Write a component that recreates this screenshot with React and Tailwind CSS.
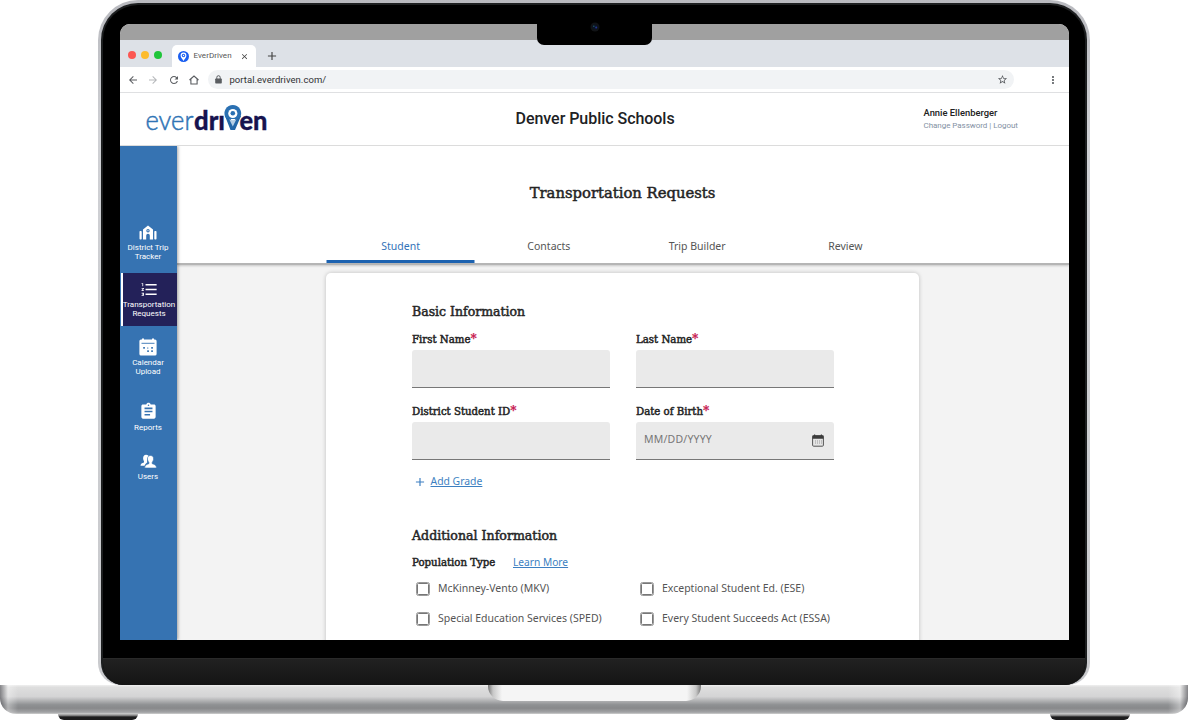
import React from "react";
import { MdArrowBack, MdArrowForward, MdRefresh, MdStarBorder, MdMoreVert, MdAssignment, MdFormatListNumbered, MdClose, MdAdd } from "react-icons/md";

const slab = "font-['DejaVu_Serif',serif] font-normal [-webkit-text-stroke:0.5px_#262626]";
const sans = "font-['Noto_Sans',sans-serif]";

function Logo() {
  return (
    <svg className="w-[130px] h-[40px]" viewBox="0 -4 130 40">
      <text x="0.500" y="26" textLength="48" lengthAdjust="spacingAndGlyphs" fontFamily="Lato" fontWeight="300" fontSize="27" fill="#2f74b5" stroke="#2f74b5" strokeWidth="0.500">ever</text>
      <text x="49" y="26" textLength="31" lengthAdjust="spacingAndGlyphs" fontFamily="Lato" fontWeight="900" fontSize="26" fill="#17134f" stroke="#17134f" strokeWidth="0.300">drı</text>
      <text x="94.500" y="26" textLength="28" lengthAdjust="spacingAndGlyphs" fontFamily="Lato" fontWeight="900" fontSize="26" fill="#17134f" stroke="#17134f" strokeWidth="0.300">en</text>
      <path d="M80 12H84.500L87.800 20.500 91.500 12H96L90 26H85.500Z" fill="#2468a8" />
      <path d="M80.300 13.200A8.400 8.400 0 1 1 95.300 13.200L91.500 15H84Z" fill="#2a70b2" />
      <circle cx="87.800" cy="9.500" r="4.600" fill="#fff" />
      <circle cx="87.800" cy="9.200" r="2.300" fill="#2a70b2" />
      <path d="M84.200 15.300Q87.800 17.300 91.400 15.300L87.800 22.500Z" fill="#b5cfe5" />
    </svg>
  );
}

function SchoolIcon() {
  return (
    <svg className="w-[18px] h-[15px]" viewBox="0 0 18 15" fill="#fff">
      <path fillRule="evenodd" d="M9 0.500L14 4.600V14.500H10.800V10.500a1.800 1.800 0 0 0-3.600 0V14.500H4V4.600ZM9 4a1.700 1.700 0 1 0 0 3.400A1.700 1.700 0 0 0 9 4Z" />
      <rect x="0.500" y="6" width="2.200" height="8.500" rx="0.800" />
      <rect x="15.300" y="6" width="2.200" height="8.500" rx="0.800" />
      <circle cx="9" cy="5.700" r="0.600" />
    </svg>
  );
}

function CalendarIcon() {
  return (
    <svg className="w-[18px] h-[18px]" viewBox="0 0 18 18">
      <path fill="#fff" d="M2 1.500h1V0.500h2v1h8v-1h2v1h1a1.600 1.600 0 0 1 1.600 1.600V16a1.600 1.600 0 0 1-1.600 1.600H2A1.600 1.600 0 0 1 .400 16V3.100A1.600 1.600 0 0 1 2 1.500Z" />
      <path stroke="#3673b2" strokeWidth="0.900" d="M2.500 5.300h13" />
      <g fill="#3673b2">
        <rect x="4.200" y="9" width="1.700" height="1.700" /><rect x="8.200" y="12.300" width="1.700" height="1.700" /><rect x="8.200" y="9.500" width="1.100" height="1.100" />
        <rect x="12.200" y="9" width="1.700" height="1.700" /><rect x="12.200" y="12.300" width="1.700" height="1.700" />
      </g>
    </svg>
  );
}

function UsersIcon() {
  return (
    <svg className="w-[17px] h-[15px]" viewBox="0 0 17 15" fill="#fff">
      <path d="M6 0.800c2 0 3 1 3 2.400C7 4 6.600 6 7.300 8.300L5.500 10 4.500 11.800H0.500C0.500 9.500 2 9 4 8.400V7.200C2.500 5 2.800 0.800 6 0.800Z" />
      <path stroke="#3673b2" strokeWidth="0.600" d="M10.500 1.500c2.300 0 3.300 1.700 3 3.800-.100 1.300-.700 2.300-1.300 3v1.400c2 .700 4.300 1 4.300 4.300H4.700c0-3.300 2.300-3.600 4.200-4.300V8.300C8.200 7.600 7.600 6.600 7.500 5.300 7.200 3.200 8.300 1.500 10.500 1.500Z" />
    </svg>
  );
}

function DateIcon() {
  return (
    <svg className="w-[12px] h-[13px]" viewBox="0 0 12 13">
      <rect x="0.600" y="1.600" width="10.800" height="10.600" rx="1" fill="#e5e5e5" stroke="#555" />
      <path fill="#3c3c3c" d="M.500 1.500H2V.500h1.200v1h5.600v-1H10v1h1.500v3.300H.500Z" />
      <path stroke="#999" strokeWidth="1" strokeDasharray="1 1" d="M3 7h7M3 9h7" />
    </svg>
  );
}

function NavItem({ icon, lines, className }) {
  return (
    <div className={`flex flex-col items-center shrink-0 ${className}`}>
      <div className="flex h-[18px] items-center justify-center">{icon}</div>
      <div className="flex flex-col items-center mt-[2px] text-[8px] leading-[9px] text-white whitespace-nowrap">
        {lines.map((l) => <span key={l}>{l}</span>)}
      </div>
    </div>
  );
}

function Field({ label, children }) {
  return (
    <div className="w-[198px]">
      <div className={`flex h-[20px] text-[10.200px] leading-[19px] text-[#262626] whitespace-nowrap ${slab}`}>
        {label}<span className="font-bold text-[12px] leading-[19px] text-[#c7174f] [-webkit-text-stroke:0.2px_#c7174f]">*</span>
      </div>
      <div className="flex h-[38px] items-center justify-between rounded-t-[3px] border-b border-[#777] bg-[#eaeaea] pl-2 pr-[10px]">
        {children}
      </div>
    </div>
  );
}

function Check({ label }) {
  return (
    <div className="flex h-[30px] items-center pl-[5px]">
      <div className="h-[12px] w-[12px] rounded-[1.500px] border-[1.500px] border-[#777] outline-[0.500px] outline-[#999] shrink-0" />
      <span className={`ml-[9px] text-[10.500px] text-[#555] whitespace-nowrap ${sans}`}>{label}</span>
    </div>
  );
}

function BrowserChrome() {
  return (
    <>
      <div className="h-4 shrink-0 bg-[#a0a0a0]" />
      <div className="flex h-[27px] shrink-0 items-end bg-[#dde1e7] pl-[8px]">
        <div className="flex h-[27px] items-center gap-[5px] w-[44px] pt-[2px]">
          <div className="h-[8px] w-[8px] rounded-full bg-[#fc5753]" />
          <div className="h-[8px] w-[8px] rounded-full bg-[#fdbc2e]" />
          <div className="h-[8px] w-[8px] rounded-full bg-[#1fc53a]" />
        </div>
        <div className="flex h-[22px] w-[84px] items-center rounded-t-[5px] bg-white pl-[6px]">
          <svg className="h-[11px] w-[11px]" viewBox="0 0 11 11">
            <circle cx="5.500" cy="5.500" r="5.500" fill="#1b5ff0" />
            <path fill="#fff" d="M5.500 1.500a2.900 2.900 0 0 1 2.900 2.900C8.400 6.500 6.600 7.500 5.500 10 4.400 7.500 2.600 6.500 2.600 4.400A2.900 2.900 0 0 1 5.500 1.500Z" />
            <circle cx="5.500" cy="4.500" r="1.700" fill="#1b5ff0" /><circle cx="5.500" cy="4.500" r="0.700" fill="#fff" />
          </svg>
          <span className="ml-[5px] text-[8px] text-[#555] tracking-[0.050px] w-[46px]">EverDriven</span>
          <MdClose className="h-[9px] w-[9px] text-[#444]" />
        </div>
        <MdAdd className="mb-[4px] ml-[9px] h-[14px] w-[14px] text-[#444]" />
      </div>
      <div className="flex h-[26px] shrink-0 items-center border-b border-[#dfe0e2] bg-white pl-[7px] text-[#5a5d61]">
        <MdArrowBack className="h-[12px] w-[12px]" />
        <MdArrowForward className="ml-[8px] h-[12px] w-[12px] text-[#b5b7ba]" />
        <MdRefresh className="ml-[9px] h-[12px] w-[12px]" />
        <svg className="ml-[8px] h-[12px] w-[12px]" viewBox="0 0 12 12" fill="none" stroke="currentColor" strokeWidth="1.100">
          <path d="M1.500 6L6 2 10.500 6M2.900 5.200V10H9.100V5.200" />
        </svg>
        <div className="ml-[8px] flex h-[19px] w-[806px] items-center rounded-full bg-[#f1f3f5] pl-[6px] pr-[6px]">
          <svg className="h-[9px] w-[9px]" viewBox="0 0 9 9">
            <rect x="1.200" y="3.500" width="6.600" height="5" rx="0.700" fill="#5a5d61" />
            <path d="M2.800 4V2.400a1.700 1.700 0 0 1 3.400 0V4" fill="none" stroke="#5a5d61" />
          </svg>
          <span className="ml-[7px] mt-px grow text-[9.500px] tracking-[0.040px] text-[#303134]">portal.everdriven.com/</span>
          <MdStarBorder className="h-[11px] w-[11px]" />
        </div>
        <MdMoreVert className="ml-[33px] h-[12px] w-[12px]" />
      </div>
    </>
  );
}

function Screen() {
  return (
    <div className="flex h-[616px] w-[949px] flex-col overflow-hidden rounded-t-[10px] bg-white">
      <BrowserChrome />
      <header className="flex h-[53px] shrink-0 border-b border-[#dcdcdc] bg-white pl-[25px]">
        <div className="w-[370px] pt-[7px]"><Logo /></div>
        <div className="w-[408px] pl-px pt-[15px] text-[16px] leading-[21px] font-medium tracking-[-0.040px] text-[#202124]">Denver Public Schools</div>
        <div className="flex flex-col pl-px pt-[14px] whitespace-nowrap">
          <span className="text-[9.400px] leading-[12px] font-medium text-[#222]">Annie Ellenberger</span>
          <span className="text-[8px] leading-[13px] tracking-[-0.040px] text-[#8391a3]">Change Password | Logout</span>
        </div>
      </header>
      <div className="flex grow overflow-hidden">
        <nav className="z-10 flex w-[57px] shrink-0 flex-col bg-[#3673b2] shadow-[1px_0_3px_rgba(0,0,0,0.350)]">
          <NavItem className="h-[127px] pt-[77px]" icon={<SchoolIcon />} lines={["District Trip", "Tracker"]} />
          <NavItem className="ml-px h-[53px] border-l-2 border-white bg-[#232159] pt-[7px] pr-[1px]" icon={<MdFormatListNumbered className="h-[19px] w-[19px] text-white" />} lines={["Transportation", "Requests"]} />
          <NavItem className="pt-[12px]" icon={<CalendarIcon />} lines={["Calendar", "Upload"]} />
          <NavItem className="pt-[27px]" icon={<MdAssignment className="mb-[2px] h-[19px] w-[19px] text-white" />} lines={["Reports"]} />
          <NavItem className="pt-[20px]" icon={<UsersIcon />} lines={["Users"]} />
        </nav>
        <main className="flex grow flex-col bg-[#f3f3f3]">
          <div className="z-[1] flex h-[119px] shrink-0 flex-col items-center border-b-2 border-[#b5b5b5] bg-white shadow-[0_1px_2px_rgba(0,0,0,0.180)]">
            <h1 className={`mt-[36px] text-[14.800px] leading-[22px] text-[#222] whitespace-nowrap ${slab}`}>Transportation Requests</h1>
            <div className={`mt-[25px] flex w-[593px] translate-x-[0.500px] text-[10.500px] text-[#555] ${sans}`}>
              <div className="flex h-[34px] flex-1 justify-center border-b-[3px] border-[#1c62b0] pt-[9px] leading-[16px] text-[#3272b8]">Student</div>
              <div className="flex flex-1 justify-center pt-[9px] leading-[16px]">Contacts</div>
              <div className="flex flex-1 justify-center pt-[9px] leading-[16px]">Trip Builder</div>
              <div className="flex flex-1 justify-center pt-[9px] leading-[16px]">Review</div>
            </div>
          </div>
          <div className="mt-[8px] ml-[149px] flex h-[400px] w-[593px] shrink-0 flex-col rounded-t-[5px] bg-white pl-[86.500px] shadow-[0_0_4px_rgba(0,0,0,0.220)]">
            <h2 className={`mt-[29px] text-[12.500px] leading-[20px] text-[#262626] ${slab}`}>Basic Information</h2>
            <div className="mt-[8px] grid w-[422px] grid-cols-2 gap-x-[26px] gap-y-[13.500px]">
              <Field label="First Name" />
              <Field label="Last Name" />
              <Field label="District Student ID" />
              <Field label="Date of Birth">
                <span className={`text-[10.500px] tracking-[0.200px] text-[#777] ${sans}`}>MM/DD/YYYY</span>
                <DateIcon />
              </Field>
            </div>
            <div className={`mt-[12.500px] flex h-[20px] items-center pl-[1px] text-[10.400px] text-[#3d7fc1] ${sans}`}>
              <MdAdd className="h-[14px] w-[14px]" />
              <span className="ml-[3.500px] underline underline-offset-1">Add Grade</span>
            </div>
            <h2 className={`mt-[34px] text-[12.600px] leading-[20px] text-[#262626] ${slab}`}>Additional Information</h2>
            <div className="mt-[7px] flex h-[20px] items-center text-[10.200px]">
              <span className={`w-[101px] text-[#262626] whitespace-nowrap ${slab}`}>Population Type</span>
              <span className={`text-[#3d7fc1] underline underline-offset-1 ${sans}`}>Learn More</span>
            </div>
            <div className="grid w-[422px] grid-cols-[198px_198px] gap-x-[26px] pt-px">
              <Check label="McKinney-Vento (MKV)" />
              <Check label="Exceptional Student Ed. (ESE)" />
              <Check label="Special Education Services (SPED)" />
              <Check label="Every Student Succeeds Act (ESSA)" />
            </div>
          </div>
        </main>
      </div>
    </div>
  );
}

export default function App() {
  return (
    <div className="flex h-[720px] w-[1188px] flex-col items-center overflow-hidden bg-white font-['Roboto',sans-serif]">
      <div className="relative flex h-[685px] w-[992px] shrink-0 rounded-t-[40px] rounded-b-[22px] bg-[linear-gradient(#b9babf,#cfd0d4_20%,#c9cacd)] px-[3px] pt-[3px]">
        <div className="flex w-full flex-col items-center overflow-hidden rounded-t-[37px] rounded-b-[22px] border-2 border-b-0 border-[#1d1f20] bg-black pt-[19px]">
          <Screen />
          <div className="mt-[18px] w-full grow border-t border-[#292929] bg-[linear-gradient(#212121,#141414)]" />
        </div>
        <div className="absolute left-[439px] top-[20px] flex h-[25px] w-[115px] justify-center rounded-b-[7px] bg-black pt-[2px]">
          <svg className="h-[10px] w-[10px]" viewBox="0 0 10 10">
            <circle cx="5" cy="5" r="4.500" fill="#111316" />
            <circle cx="5" cy="5" r="2.600" fill="#0a1424" />
            <circle cx="3.800" cy="4.300" r="0.800" fill="#205768" /><circle cx="6.200" cy="5.500" r="1" fill="#24358f" />
          </svg>
        </div>
      </div>
      <div className="flex h-[29px] w-full shrink-0 justify-center rounded-b-[16px] bg-[linear-gradient(90deg,rgba(70,70,75,0.600)_0px,rgba(255,255,255,0.350)_8px,transparent_18px,transparent_1168px,rgba(255,255,255,0.400)_1180px,rgba(70,70,75,0.600)_1188px),linear-gradient(#efefef,#dedede_8%,#d4d4d5_40%,#8f9193_68%,#88898b_80%,#a2a3a5_94%,#d0d0d0)]">
        <div className="h-[16px] w-[213px] rounded-b-[15px] bg-[linear-gradient(90deg,#777,#c8c8c8_5px,#f5f5f5_14px,#f5f5f5_199px,#c8c8c8_208px,#777)]" />
      </div>
      <div className="flex w-full shrink-0 justify-between px-[58px]">
        <div className="h-[6px] w-[80px] rounded-b-[20px] bg-[linear-gradient(#aaa_15%,#1c1c1d_50%)]" />
        <div className="h-[6px] w-[80px] rounded-b-[20px] bg-[linear-gradient(#aaa_15%,#1c1c1d_50%)]" />
      </div>
    </div>
  );
}
